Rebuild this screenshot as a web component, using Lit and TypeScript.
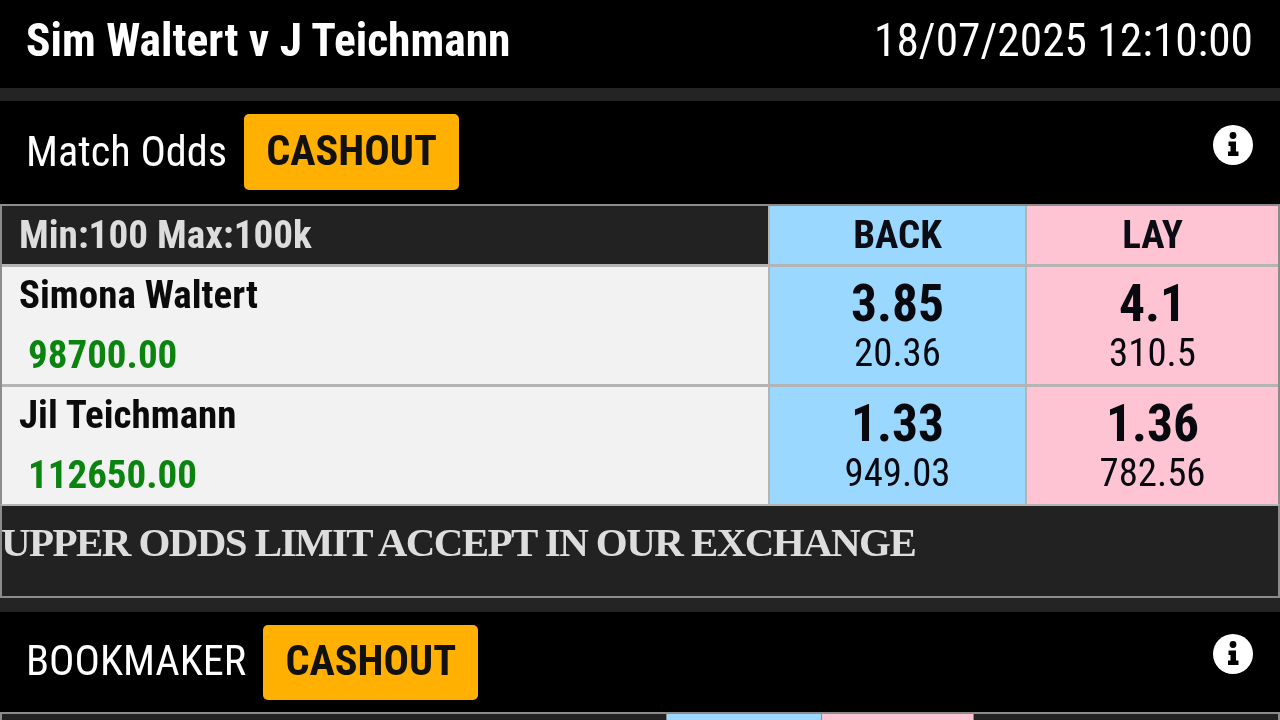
import { LitElement, html, css, svg } from "lit";
import { customElement } from "lit/decorators.js";

const infoIcon = svg`<svg class="info" viewBox="0 0 40 40">
  <circle cx="20" cy="20" r="20" fill="#fff"></circle>
  <circle cx="20" cy="10.5" r="3.4" fill="#000"></circle>
  <path d="M15.5 16.5h7.5v10h2.5v4.5h-10.5v-4.5h2.5v-5.500h-2z" fill="#000"></path>
</svg>`;

const runners = [
  { name: "Simona Waltert", pl: "98700.00", back: "3.85", backSize: "20.36", lay: "4.1", laySize: "310.5" },
  { name: "Jil Teichmann", pl: "112650.00", back: "1.33", backSize: "949.03", lay: "1.36", laySize: "782.56" },
];

@customElement("app-root")
export class AppRoot extends LitElement {
  static styles = css`
    :host {
      display: block;
      width: 1280px;
      height: 720px;
      overflow: hidden;
      background: #000;
      font-family: Roboto, "Liberation Sans", sans-serif;
      font-stretch: 75%;
      color: #fff;
      filter: blur(0.4px);
    }
    .top {
      height: 88px;
      padding: 0 27px 8px 26px;
      display: flex;
      justify-content: space-between;
      align-items: center;
      box-sizing: border-box;
    }
    .title { font-size: 45.5px; font-weight: 700; }
    .date { font-size: 45.4px; }
    .divider { height: 13px; background: #242424; }
    .divider.tall { height: 14px; }
    .market-head {
      height: 103px;
      padding: 0 27px 2px 26px;
      display: flex;
      align-items: center;
      gap: 17px;
      box-sizing: border-box;
    }
    .market-head.short { height: 100px; padding-bottom: 0; }
    .market-name { font-size: 42.3px; padding-bottom: 1px; }
    .short .market-name { padding-bottom: 3px; }
    .cash {
      width: 215px;
      height: 76px;
      padding-bottom: 2px;
      box-sizing: border-box;
      background: #ffb000;
      border-radius: 5px;
      color: #111;
      font-size: 42.3px;
      font-weight: 700;
      display: flex;
      align-items: center;
      justify-content: center;
    }
    .short .cash { height: 75px; padding-bottom: 3px; }
    .info { width: 40px; height: 40px; margin-left: auto; position: relative; top: -7px; }
    .short .info { top: -8px; }
    .table {
      border: 2px solid #8c8c8c;
      border-bottom: 0;
      display: grid;
      grid-template-columns: 766px 255px 251px;
      column-gap: 2px;
      row-gap: 3px;
      background: #b4b4b4;
    }
    .corner {
      background: #222;
      color: #ddd;
      font-size: 39.2px;
      font-weight: 700;
      padding-left: 17px;
      display: flex;
      align-items: center;
      height: 58px;
    }
    .label {
      font-size: 39px;
      font-weight: 700;
      color: #0c0c14;
      display: flex;
      align-items: center;
      justify-content: center;
    }
    .back { background: #9ad8ff; }
    .lay { background: #ffc4d4; }
    .runner {
      background: #f2f2f2;
      height: 117px;
      color: #0b0b0b;
      padding-left: 17px;
      box-sizing: border-box;
    }
    .name { font-size: 39px; font-weight: 700; line-height: 42px; padding-top: 7px; }
    .pl { font-size: 39px; font-weight: 700; color: #0a830f; margin: 18px 0 0 9px; line-height: 42px; }
    .odds {
      height: 117px;
      display: flex;
      flex-direction: column;
      align-items: center;
      color: #08080f;
    }
    .price { font-size: 51.5px; font-weight: 700; line-height: 58px; padding-top: 8px; }
    .size { font-size: 38.8px; line-height: 40px; }
    .notice {
      height: 94px;
      border: 2px solid #8c8c8c;
      border-top-color: #b4b4b4;
      background: #222;
      color: #ddd;
      font-family: "Liberation Serif", serif;
      font-stretch: normal;
      font-size: 41px;
      font-weight: 700;
      letter-spacing: -1.58px;
      text-indent: -1px;
      line-height: 72px;
      white-space: nowrap;
      overflow: hidden;
      box-sizing: border-box;
    }
    .next {
      border: 2px solid #8c8c8c;
      border-bottom: 0;
      display: grid;
      grid-template-columns: 664px 154px 151px 1fr;
      column-gap: 1px;
      height: 8px;
      background: #8c8c8c;
    }
    .dark { background: #222; }
  `;

  render() {
    return html`
      <div class="top">
        <div class="title">Sim Waltert v J Teichmann</div>
        <div class="date">18/07/2025 12:10:00</div>
      </div>
      <div class="divider"></div>
      <div class="market-head">
        <div class="market-name">Match Odds</div>
        <div class="cash">CASHOUT</div>
        ${infoIcon}
      </div>
      <div class="table">
        <div class="corner">Min:100 Max:100k</div>
        <div class="label back">BACK</div>
        <div class="label lay">LAY</div>
        ${runners.map(
          (r) => html`
            <div class="runner">
              <div class="name">${r.name}</div>
              <div class="pl">${r.pl}</div>
            </div>
            <div class="odds back">
              <div class="price">${r.back}</div>
              <div class="size">${r.backSize}</div>
            </div>
            <div class="odds lay">
              <div class="price">${r.lay}</div>
              <div class="size">${r.laySize}</div>
            </div>
          `
        )}
      </div>
      <div class="notice">UPPER ODDS LIMIT ACCEPT IN OUR EXCHANGE</div>
      <div class="divider tall"></div>
      <div class="market-head short">
        <div class="market-name">BOOKMAKER</div>
        <div class="cash">CASHOUT</div>
        ${infoIcon}
      </div>
      <div class="next">
        <div class="dark"></div>
        <div class="back"></div>
        <div class="lay"></div>
        <div class="dark"></div>
      </div>
    `;
  }
}
